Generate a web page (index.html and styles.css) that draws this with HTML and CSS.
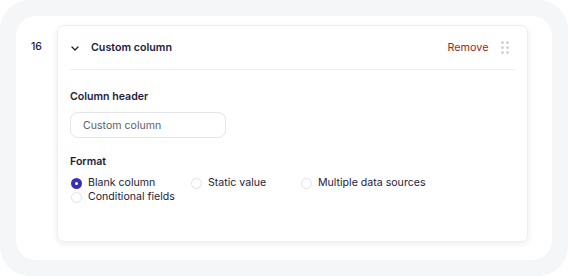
FILE: index.html
```html
<!DOCTYPE html>
<html>
<head>
    <meta charset="UTF-8">
    <meta name="viewport" content="width=device-width, initial-scale=1.0">
    <title>Custom column</title>
    <link rel="stylesheet" href="styles.css">
</head>
<body>
    <div class="frame">
        <div class="panel">
            <div class="row-num">16</div>
            <div class="card">
                <div class="card-head">
                    <svg class="chevron" width="8" height="5" viewBox="0 0 8 5"><path d="M1 1l3 3 3-3" fill="none" stroke="#1e1b3a" stroke-width="1.3" stroke-linecap="round" stroke-linejoin="round"/></svg>
                    <span class="title">Custom column</span>
                    <a class="remove">Remove</a>
                    <span class="grip">
                        <i></i><i></i><i></i><i></i><i></i><i></i>
                    </span>
                </div>
                <div class="card-body">
                    <label class="field-label">Column header</label>
                    <input class="text-input" type="text" placeholder="Custom column">

                    <label class="field-label format">Format</label>
                    <div class="radios">
                        <span class="radio checked">Blank column</span>
                        <span class="radio">Static value</span>
                        <span class="radio">Multiple data sources</span>
                        <span class="radio">Conditional fields</span>
                    </div>
                </div>
            </div>
        </div>
    </div>
</body>
</html>
```

FILE: styles.css
```css
body { margin: 0; background: #fff; font-family: Inter, "Noto Sans", sans-serif; color: #1e1b3a; }
.frame { width: 568px; height: 276px; box-sizing: border-box; background: #f5f6f8; border-radius: 30px; padding: 16px; }
.panel { height: 244px; box-sizing: border-box; background: #fff; border-radius: 20px; padding: 9px 24px 18px 15px; display: flex; }
.row-num { width: 26px; font-size: 10.5px; font-weight: 500; padding-top: 15px; }
.card { flex: 1; border: 1px solid #eceef1; border-radius: 7px; box-shadow: 0 2px 6px rgba(20,20,50,0.08); padding: 0 12px; }
.card-head { height: 43px; display: flex; align-items: center; border-bottom: 1px solid #eceef1; }
.chevron { margin: 1px 0 0 1px; }
.title { font-size: 10.7px; font-weight: 600; margin-left: 12px; flex: 1; }
.remove { font-size: 10.8px; color: #9c2a22; cursor: pointer; }
.grip { display: grid; grid-template-columns: 3px 3px; gap: 2px 2.5px; margin: 0 6px 0 12px; }
.grip i { width: 3px; height: 3px; border-radius: 50%; background: #cfd3da; }
.card-body { padding: 20px 0 0; }
.field-label { display: block; font-size: 10.6px; font-weight: 600; line-height: 14px; }
.text-input { display: block; margin-top: 8px; width: 156px; height: 26px; box-sizing: border-box; border: 1px solid #e3e5ea; border-radius: 8px; padding: 0 12px; font-family: inherit; font-size: 10.6px; color: #1e1b3a; outline: none; }
.text-input::placeholder { color: #5f6068; }
.format { margin-top: 17px; }
.radios { display: grid; grid-template-columns: 120px 110px auto; margin-top: 7px; margin-left: 1px; font-size: 10.6px; line-height: 14px; }
.radio { display: flex; align-items: center; gap: 6px; }
.radio::before { content: ""; width: 9px; height: 9px; border-radius: 50%; border: 1px solid #dfe2e7; flex: none; }
.radio.checked::before { width: 3px; height: 3px; border: 4px solid #3a2fb4; }
```
